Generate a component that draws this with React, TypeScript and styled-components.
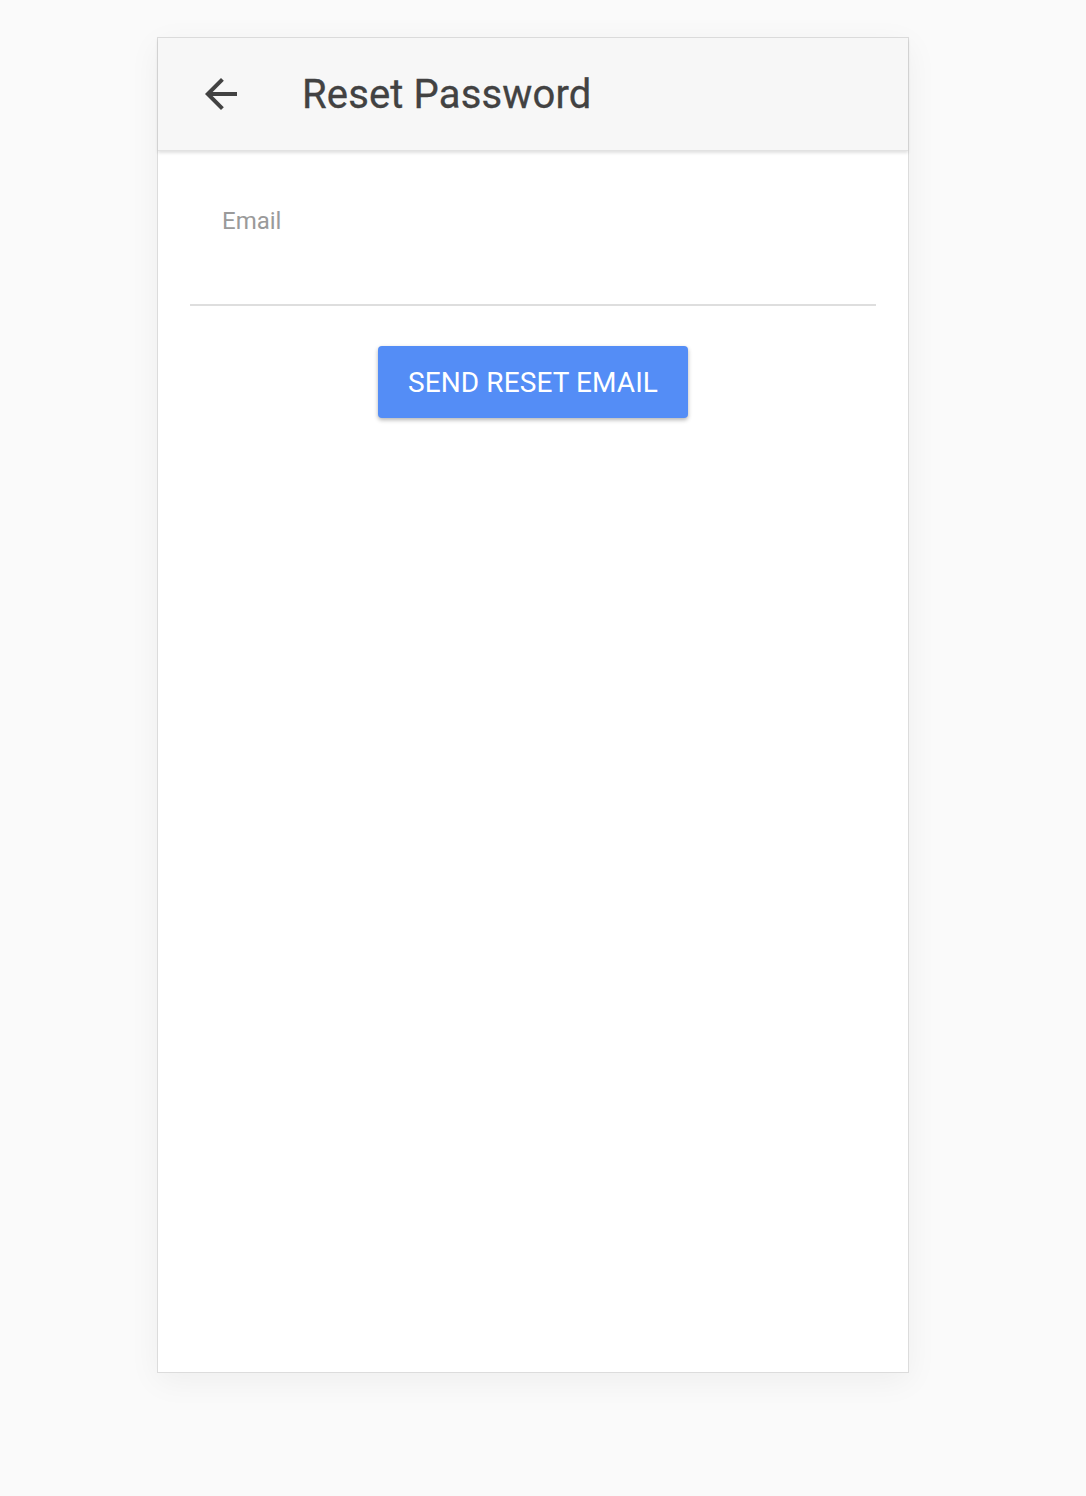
import React from 'react';
import styled, { createGlobalStyle } from 'styled-components';

const GlobalStyle = createGlobalStyle`
  html, body {
    margin: 0;
    padding: 0;
    background: #fafafa;
    font-family: Roboto, "Liberation Sans", sans-serif;
  }
`;

const Page = styled.div`
  min-height: 1496px;
  padding-top: 37px;
  box-sizing: border-box;
`;

const Card = styled.div`
  width: 752px;
  height: 1336px;
  margin-left: 157px;
  box-sizing: border-box;
  background: #fff;
  border: 1px solid #dcdcdc;
  box-shadow: 0 8px 30px rgba(0, 0, 0, 0.05);
  display: flex;
  flex-direction: column;
`;

const Header = styled.header`
  height: 112px;
  background: #f7f7f7;
  display: flex;
  align-items: center;
  padding-left: 39px;
  box-shadow: 0 2px 3px rgba(0, 0, 0, 0.12);
  border-bottom: 1px solid #e2e2e2;
  position: relative;
`;

const BackButton = styled.button`
  border: none;
  background: none;
  padding: 0;
  width: 48px;
  height: 48px;
  display: flex;
  align-items: center;
  justify-content: center;
  cursor: pointer;
  margin-right: 57px;
`;

const Title = styled.h1`
  margin: 0;
  font-size: 40px;
  font-weight: 400;
  color: #424242;
  letter-spacing: 0.15px;
  -webkit-text-stroke: 0.3px #424242;
`;

const Body = styled.div`
  padding: 0 32px;
  display: flex;
  flex-direction: column;
`;

const Field = styled.label`
  display: flex;
  flex-direction: column;
  border-bottom: 2px solid #dedede;
  height: 155px;
  box-sizing: border-box;
  padding-top: 56px;
`;

const FieldLabel = styled.span`
  padding-left: 32px;
  font-size: 24px;
  color: #9a9a9a;
`;

const Input = styled.input`
  border: none;
  outline: none;
  background: transparent;
  font-family: inherit;
  font-size: 22px;
  padding: 10px 32px;
`;

const Actions = styled.div`
  display: flex;
  justify-content: center;
  padding-top: 40px;
`;

const PrimaryButton = styled.button`
  width: 310px;
  height: 72px;
  border: none;
  border-radius: 4px;
  background: #548df6;
  color: #fff;
  font-family: Roboto, "Liberation Sans", sans-serif;
  font-size: 28px;
  letter-spacing: 0.1px;
  box-shadow: 0 2px 4px rgba(0, 0, 0, 0.3);
  cursor: pointer;
`;

const App: React.FC = () => {
  return (
    <>
      <GlobalStyle />
      <Page>
        <Card>
          <Header>
            <BackButton aria-label="Back">
              <svg width="48" height="48" viewBox="0 0 24 24">
                <path
                  d="M20 11H7.83l5.59-5.59L12 4l-8 8 8 8 1.41-1.41L7.83 13H20v-2z"
                  fill="#424242"
                />
              </svg>
            </BackButton>
            <Title>Reset Password</Title>
          </Header>
          <Body>
            <Field>
              <FieldLabel>Email</FieldLabel>
              <Input type="email" />
            </Field>
            <Actions>
              <PrimaryButton>SEND RESET EMAIL</PrimaryButton>
            </Actions>
          </Body>
        </Card>
      </Page>
    </>
  );
};

export default App;
